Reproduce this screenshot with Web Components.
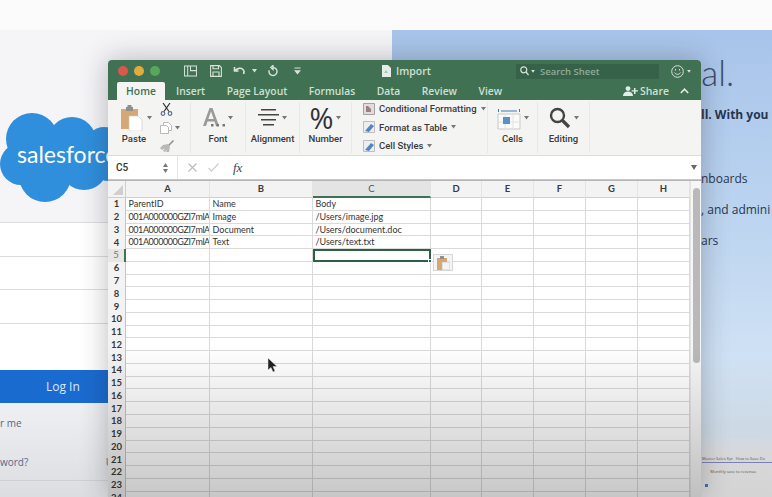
<!DOCTYPE html>
<html>
<head>
<meta charset="utf-8">
<title>Import</title>
<style>
  html, body { margin: 0; height: 100%; overflow: hidden; background: #fbfbfb; }
  body { font-family: "Open Sans", "Liberation Sans", sans-serif; }
</style>
</head>
<body>
<sf-page>
  <sf-login slot="left"></sf-login>
  <sf-promo slot="right"></sf-promo>
  <xl-window slot="window"></xl-window>
</sf-page>

<script>
const caret = `<svg width="5" height="4" viewBox="0 0 5 4"><path d="M0 0h5L2.500 3.500z" fill="#777"/></svg>`;

class SfPage extends HTMLElement {
  constructor() {
    super();
    this.attachShadow({ mode: "open" });
    this.shadowRoot.innerHTML = `
      <style>
        :host { display: block; position: relative; width: 772px; height: 497px; overflow: hidden; }
        .top { height: 30px; background: #fcfbfb; }
        .cols { display: grid; grid-template-columns: 392px 380px; height: 467px; }
        /* the window floats over the page like on a desktop */
        ::slotted([slot="window"]) { position: absolute; left: 108px; top: 60px; }
      </style>
      <div class="top"></div>
      <div class="cols">
        <slot name="left"></slot>
        <slot name="right"></slot>
      </div>
      <slot name="window"></slot>
    `;
  }
}

class SfLogin extends HTMLElement {
  constructor() {
    super();
    this.attachShadow({ mode: "open" });
    this.shadowRoot.innerHTML = `
      <style>
        :host { display: block; background: #f5f5f8; color: #54698d; overflow: hidden; }
        .logo { height: 192px; position: relative; }
        .logo svg { position: absolute; left: 0; top: 80px; display: block; }
        .logo span { position: absolute; left: 17px; top: 107px; font: 400 23px/34px Lato, "Open Sans", sans-serif; color: #fff; white-space: nowrap; }
        .form { background: #fff; }
        .field { height: 33.5px; border-top: 1px solid #dcdde0; box-sizing: border-box; }
        .gap { height: 14px; background: #fff; }
        .btn { height: 33px; background: #1a6bcf; color: #d9e8fa; font-size: 12px; display: flex; align-items: center; }
        .btn span { margin-left: 46px; }
        .foot { height: 94px; background: linear-gradient(#eff0f3, #dcdde0); font-size: 10px; }
        .row { display: flex; justify-content: space-between; }
        .r1 { padding-top: 13px; height: 26px; }
        .r2 { height: 14px; margin-top: 13px; }
        .line { margin-top: 11px; border-top: 1px solid #cfd0d3; }
      </style>
      <div class="logo">
        <svg width="125" height="95" viewBox="0 0 125 95" fill="#2f8fdc">
          <circle cx="32" cy="29" r="26"/><circle cx="72" cy="31" r="24"/><circle cx="104" cy="36" r="19"/>
          <circle cx="21" cy="54" r="21"/><circle cx="45" cy="66" r="26"/><circle cx="84" cy="56" r="24"/><circle cx="108" cy="54" r="17"/>
        </svg>
        <span>salesforce</span>
      </div>
      <div class="form">
        <div class="field"></div>
        <div class="field"></div>
        <div class="field"></div>
        <div class="field"></div>
        <div class="gap"></div>
      </div>
      <div class="btn"><span>Log In</span></div>
      <div class="foot">
        <div class="r1">r me</div>
        <div class="r2 row"><span>word?</span><span style="margin-right:279px">U</span></div>
        <div class="line"></div>
      </div>
    `;
  }
}

class SfPromo extends HTMLElement {
  constructor() {
    super();
    this.attachShadow({ mode: "open" });
    this.shadowRoot.innerHTML = `
      <style>
        :host { display: block; overflow: hidden; color: #26364f;
          background: linear-gradient(#a8c4ea 0, #b9d2ef 35%, #cfe1f4 70%, #cdd9e4 86%, #d8d8da 91%, #d4d4d4 100%); }
        h1 { margin: 22px 0 0 51px; font: 300 35px/40px Lato, "Open Sans", sans-serif; white-space: nowrap; color: #3c4c66; height: 40px; }
        p { margin: 0; padding-left: 309px; font-size: 12px; line-height: 16px; white-space: nowrap; }
        .lead { margin-top: 15px; font-weight: 700; }
        .a { margin-top: 48px; }
        .b { margin-top: 15px; }
        .strip { margin: 207px 0 0 310px; font-size: 4px; line-height: 6px; white-space: nowrap; color: #555; }
        .strip div:first-child { border-bottom: 1px solid #7c80b4; margin-bottom: 6px; }
        .dot { display: block; width: 3px; height: 3px; margin: 9px 0 0 3px; background: #3b6fb0; }
      </style>
      <h1>Start your free trial.</h1>
      <p class="lead">ll. With you</p>
      <p class="a">nboards</p>
      <p class="b">, and admini</p>
      <p class="b">ars</p>
      <div class="strip">
        <div>Master Sales Kpi &nbsp; How to Save Da</div>
        <div>&nbsp; &nbsp; &nbsp; &nbsp; Monthly save to revenue</div>
        <i class="dot"></i>
      </div>
    `;
  }
}

class XlWindow extends HTMLElement {
  constructor() {
    super();
    this.attachShadow({ mode: "open" });
    this.shadowRoot.innerHTML = `
      <style>
        :host { display: flex; flex-direction: column; width: 593px; height: 437px; overflow: hidden;
          border-radius: 4px 4px 0 0; background: #fff; box-shadow: 0 0 28px rgba(30,30,40,.3); }
      </style>
      <xl-titlebar></xl-titlebar>
      <xl-tabs></xl-tabs>
      <xl-ribbon></xl-ribbon>
      <xl-formula></xl-formula>
      <xl-sheet></xl-sheet>
    `;
  }
}

class XlTitlebar extends HTMLElement {
  constructor() {
    super();
    this.attachShadow({ mode: "open" });
    this.shadowRoot.innerHTML = `
      <style>
        :host { display: flex; align-items: center; height: 22px; background: #3f7152; color: #cfe0d4; flex: none; font-size: 10.5px; }
        .lights { display: flex; gap: 6px; margin-left: 10px; }
        .lights i { width: 10px; height: 10px; border-radius: 50%; }
        .tools { display: flex; align-items: center; margin-left: 24px; height: 22px; }
        .tools svg { display: block; }
        .doc { display: flex; align-items: center; gap: 5px; margin-left: 81px; width: 134px; flex: none; font-weight: 600; }
        .search { display: flex; align-items: center; gap: 2px; width: 143px; flex: none; height: 15px; padding-left: 4px; box-sizing: border-box; background: #37624a; color: #8eac9a; font-weight: 600; font-size: 9.5px; }
        .smile { margin-left: 12px; display: flex; align-items: center; gap: 3px; }
      </style>
      <div class="lights">
        <i style="background:#d9574b"></i><i style="background:#e2ac3c"></i><i style="background:#57a85a"></i>
      </div>
      <div class="tools">
        <svg width="13" height="12" viewBox="0 0 14 12" fill="none" stroke="#d6e3da" stroke-width="1.1"><rect x=".6" y=".6" width="12.8" height="10.8"/><path d="M4 .6v10.8M7 .6v5h6"/></svg>
        <svg style="margin-left:13px" width="12" height="12" viewBox="0 0 12 12" fill="none" stroke="#d6e3da" stroke-width="1.1"><path d="M.6.6h8.8l2 2v8.8H.6zM3 .8v3h5.5v-3M3 11V7h6v4"/></svg>
        <svg style="margin-left:11px" width="13" height="10" viewBox="0 0 13 10" fill="none" stroke="#d6e3da" stroke-width="1.6"><path d="M1.5 1v4h4M2 5c2-3 6-3.500 8-1.500 1 1 1.500 2.500 .5 4.500"/></svg>
        <svg style="margin-left:6px" width="5" height="4" viewBox="0 0 5 4"><path d="M0 0h5L2.500 3.500z" fill="#d6e3da"/></svg>
        <svg style="margin-left:10px" width="12" height="12" viewBox="0 0 12 12" fill="none" stroke="#d6e3da" stroke-width="1.4"><path d="M6 2.500a4 4 0 1 1-3.800 2.800M6 .5v4L3.800 2.500z"/></svg>
        <svg style="margin-left:15px" width="7" height="8" viewBox="0 0 8 8" fill="#d6e3da"><path d="M.5 0h7v1h-7zM0 3h8L4 8z"/></svg>
      </div>
      <div class="doc">
        <svg width="9" height="12" viewBox="0 0 9 12"><path d="M0 0h6l3 3v9H0z" fill="#e6ece8"/><path d="M2 8l2-3 2 3z" fill="#b5bdb8"/></svg>
        <span>Import</span>
      </div>
      <div class="search">
        <svg width="9" height="10" viewBox="0 0 9 10" fill="none" stroke="#d6e3da" stroke-width="1.2"><circle cx="3.800" cy="3.800" r="3"/><path d="M6 6l2.500 3"/></svg>
        <svg width="4" height="3" viewBox="0 0 5 4"><path d="M0 0h5L2.500 3.500z" fill="#d6e3da"/></svg>
        <span style="margin-left:3px">Search Sheet</span>
      </div>
      <div class="smile">
        <svg width="13" height="13" viewBox="0 0 13 13" fill="none" stroke="#d6e3da" stroke-width="1"><circle cx="6.500" cy="6.500" r="5.800"/><path d="M3.500 7.500c1.500 2.500 4.500 2.500 6 0"/><path d="M4.500 4v1.500M8.500 4v1.500"/></svg>
        <svg width="4" height="3" viewBox="0 0 5 4"><path d="M0 0h5L2.500 3.500z" fill="#d6e3da"/></svg>
      </div>
    `;
  }
}

class XlTabs extends HTMLElement {
  constructor() {
    super();
    this.attachShadow({ mode: "open" });
    this.shadowRoot.innerHTML = `
      <style>
        :host { display: flex; align-items: stretch; height: 18px; background: #3f7152; color: #cfe0d4; flex: none; font-size: 10.3px; font-weight: 600; }
        ul { display: flex; list-style: none; margin: 0 0 0 9px; padding: 0; }
        li { display: flex; align-items: center; justify-content: center; margin-right: 21.5px; }
        li.on { background: #f4f4f3; color: #3f7152; width: 48px; border-radius: 2px 2px 0 0; margin-right: 11px; }
        .share { margin-left: auto; display: flex; align-items: center; gap: 2px; margin-right: 12px; font-size: 10.5px; }
        .share svg:last-child { margin-left: 9px; }
      </style>
      <ul>
        <li class="on">Home</li>
        <li>Insert</li>
        <li>Page Layout</li>
        <li>Formulas</li>
        <li>Data</li>
        <li>Review</li>
        <li>View</li>
      </ul>
      <div class="share">
        <svg width="15" height="10" viewBox="0 0 15 10" fill="#e4ece7"><circle cx="5" cy="2.600" r="2.400"/><path d="M0 10c0-3 2-4.500 5-4.500s5 1.500 5 4.500zM11 2h1.500v2.200H15v1.400h-2.500V8H11V5.600H8.600V4.200H11z"/></svg>
        <span>Share</span>
        <svg width="9" height="6" viewBox="0 0 9 6" fill="none" stroke="#e4ece7" stroke-width="1.500"><path d="M.8 5l3.700-3.800L8.200 5"/></svg>
      </div>
    `;
  }
}

class XlGroup extends HTMLElement {
  constructor() {
    super();
    this.attachShadow({ mode: "open" });
    this.shadowRoot.innerHTML = `
      <style>
        :host { display: flex; flex-direction: column; align-items: center; box-sizing: border-box; height: 51px; border-right: 1px solid #e8e8e7; font: 500 9.5px Roboto, sans-serif; color: #3a3a3a; }
        .ic { height: 31px; display: flex; align-items: center; gap: 3px; }
        .label { line-height: 12px; }
      </style>
      <div class="ic"><slot></slot></div>
      <div class="label"></div>
    `;
  }
  connectedCallback() {
    this.style.width = this.getAttribute("w") + "px";
    this.shadowRoot.querySelector(".label").textContent = this.getAttribute("label");
  }
}

class XlRibbon extends HTMLElement {
  constructor() {
    super();
    this.attachShadow({ mode: "open" });
    this.shadowRoot.innerHTML = `
      <style>
        :host { display: flex; height: 56px; padding: 2px 0 0 8px; box-sizing: border-box; background: #f4f4f3; border-bottom: 1px solid #dcdcdc; flex: none; font: 500 9.5px Roboto, sans-serif; color: #3a3a3a; }
        .paste { display: flex; width: 75px; height: 51px; border-right: 1px solid #e8e8e7; box-sizing: border-box; }
        .paste .main { width: 36px; display: flex; flex-direction: column; align-items: center; }
        .paste .main .ic { height: 31px; display: flex; align-items: center; gap: 4px; margin-left: 5px; }
        .paste .label { line-height: 12px; }
        .mini { margin-left: 8px; display: flex; flex-direction: column; gap: 5px; padding-top: 1px; }
        .mini div { display: flex; align-items: center; gap: 3px; height: 13px; }
        .styles { width: 136px; height: 51px; border-right: 1px solid #e8e8e7; box-sizing: border-box; padding: 0 0 0 11px; display: flex; flex-direction: column; gap: 5px; }
        .styles div { display: flex; align-items: center; gap: 4px; height: 13.500px; white-space: nowrap; }
        .pct { font: 400 29px/30px "Open Sans", sans-serif; color: #333; }
      </style>
      <div class="paste">
        <div class="main">
          <div class="ic">
            <svg width="22" height="26" viewBox="0 0 22 26"><path d="M0 4h17v20H0z" fill="#d5a873"/><path d="M5 2h7v4H5z" fill="#8f8f8f"/><path d="M6.500 0h4v3h-4z" fill="#8f8f8f"/><path d="M8 11h9l4 4v11H8z" fill="#fff" stroke="#c8c8c8" stroke-width=".6"/></svg>
            ${caret}
          </div>
          <div class="label">Paste</div>
        </div>
        <div class="mini">
          <div><svg width="13" height="13" viewBox="0 0 13 13" fill="none" stroke="#333" stroke-width="1.200"><path d="M3 0l6 8.500M10 0L4 8.500"/><circle cx="3" cy="10.500" r="1.800" stroke="#5a6e8a"/><circle cx="10" cy="10.500" r="1.800" stroke="#5a6e8a"/></svg></div>
          <div style="margin-top:1px"><svg width="12" height="12" viewBox="0 0 12 12" fill="#fff" stroke="#b9b9b9"><path d="M.5 3.500h6l2 2v6h-8z"/><path d="M3.500.5h5l3 3v5h-3v-3l-2-2h-3z"/></svg>${caret}</div>
          <div style="margin-top:1px"><svg width="14" height="13" viewBox="0 0 14 13"><path d="M8 5l5-5 1 1-5 5z" fill="#8a8a8a"/><path d="M3 5l5-1 2 2-1 6-3 0 1-3-2 3-2-1 2-3-3 2-2-2z" fill="#b8b8b8"/></svg></div>
        </div>
      </div>
      <xl-group w="55" label="Font">
        <svg width="22" height="19" viewBox="0 0 22 19"><path d="M0 18L6.500 0h3L16 18h-3l-1.500-4.500h-7L3 18zM5.300 11h5.400L8 3.500z" fill="#9a9a9a"/><path d="M8 16h2.500v2.500H8zM13.500 16H16v2.500h-2.500zM19.500 16H22v2.500h-2.500z" fill="#777"/></svg>
        ${caret}
      </xl-group>
      <xl-group w="54" label="Alignment">
        <svg width="21" height="17" viewBox="0 0 21 17" fill="#444"><path d="M3 0h15v1.500H3zM0 5h21v1.500H0zM3 10h15v1.500H3zM5 15h11v1.500H5z"/></svg>
        ${caret}
      </xl-group>
      <xl-group w="52" label="Number">
        <span class="pct">%</span>
        ${caret}
      </xl-group>
      <div class="styles">
        <div><xl-cf-icon kind="cond"></xl-cf-icon><span>Conditional Formatting</span>${caret}</div>
        <div><xl-cf-icon></xl-cf-icon><span>Format as Table</span>${caret}</div>
        <div><xl-cf-icon></xl-cf-icon><span>Cell Styles</span>${caret}</div>
      </div>
      <xl-group w="50" label="Cells">
        <svg width="24" height="24" viewBox="0 0 24 24"><path d="M1 3h1v3H1zM23 3h-1v3h1zM4 4.500h16v1H4z" fill="#3b7bbf"/><path d="M1 8h22v15H1z" fill="#fbfbfb" stroke="#c9c9c9"/><path d="M8 8v15M16 8v15M1 16h22" stroke="#e2e2e2"/><path d="M6 11h7v7H6z" fill="#5b8fc9"/></svg>
        ${caret}
      </xl-group>
      <xl-group w="52" label="Editing">
        <svg width="22" height="22" viewBox="0 0 22 22" fill="none" stroke="#444"><circle cx="8.500" cy="8.500" r="6.500" stroke-width="2.400"/><path d="M13.500 13.500L20 20" stroke-width="3.200"/></svg>
        ${caret}
      </xl-group>
    `;
  }
}

class XlCfIcon extends HTMLElement {
  constructor() {
    super();
    this.attachShadow({ mode: "open" });
    this.shadowRoot.innerHTML = `
      <style>:host { display: block; width: 12px; height: 12px; }</style>
      <svg width="12" height="12" viewBox="0 0 12 12"></svg>
    `;
  }
  connectedCallback() {
    const svg = this.shadowRoot.querySelector("svg");
    if (this.getAttribute("kind") === "cond") {
      svg.innerHTML = `<path d="M.5.5h11v11H.5z" fill="#e3dcdc" stroke="#a9a0a0"/><path d="M3 3h2l3 3v3H3z" fill="#9d7f7f"/>`;
    } else {
      svg.innerHTML = `<path d="M.5.5h11v11H.5z" fill="#eeeeee" stroke="#bdbdbd"/><path d="M2 10l6-7 3 2-5 6z" fill="#4f87c4"/>`;
    }
  }
}

class XlFormula extends HTMLElement {
  constructor() {
    super();
    this.attachShadow({ mode: "open" });
    this.shadowRoot.innerHTML = `
      <style>
        :host { display: flex; align-items: center; height: 23px; background: #fff; border-bottom: 1px solid #c8c8c8; flex: none; font: 500 10px Roboto, sans-serif; color: #333; }
        .name { width: 60px; padding-left: 8px; box-sizing: border-box; display: flex; justify-content: space-between; align-items: center; height: 100%; }
        .sp { display: flex; flex-direction: column; gap: 2px; }
        .fx { margin-left: 9px; padding-left: 10px; height: 100%; border-left: 1px solid #e4e4e4; display: flex; align-items: center; gap: 11px; flex: 1; }
        em { font: italic 13px "Liberation Serif", serif; color: #444; margin-left: 3px; }
        .end { margin-left: auto; margin-right: 4px; }
      </style>
      <div class="name"><span>C5</span>
        <span class="sp">
          <svg width="5" height="4" viewBox="0 0 5 4"><path d="M0 4h5L2.500 0z" fill="#777"/></svg>
          <svg width="5" height="4" viewBox="0 0 5 4"><path d="M0 0h5L2.500 4z" fill="#777"/></svg>
        </span>
      </div>
      <div class="fx">
        <svg width="9" height="9" viewBox="0 0 9 9" fill="none" stroke="#bcbcbc" stroke-width="1.200"><path d="M.5.5l8 8M8.500.5l-8 8"/></svg>
        <svg width="11" height="9" viewBox="0 0 11 9" fill="none" stroke="#cfcfcf" stroke-width="1.200"><path d="M.5 5l3 3.200L10.500.5"/></svg>
        <em>fx</em>
        <svg class="end" width="6" height="5" viewBox="0 0 6 5"><path d="M0 0h6L3 5z" fill="#666"/></svg>
      </div>
    `;
  }
}

const SHEET_ROWS = {
  1: ["ParentID", "Name", "Body"],
  2: ["001A000000GZI7mlA", "Image", "/Users/image.jpg"],
  3: ["001A000000GZI7mlA", "Document", "/Users/document.doc"],
  4: ["001A000000GZI7mlA", "Text", "/Users/text.txt"]
};

class XlSheet extends HTMLElement {
  constructor() {
    super();
    this.attachShadow({ mode: "open" });
    let cells = `<div class="h corner"><svg width="10" height="10" viewBox="0 0 10 10"><path d="M10 0v10H0z" fill="#cfcfcf"/></svg></div>`;
    "ABCDEFGH".split("").forEach(c => {
      cells += `<div class="h col${c === "C" ? " sel" : ""}">${c}</div>`;
    });
    for (let r = 1; r <= 24; r++) {
      cells += `<div class="h row${r === 5 ? " sel" : ""}">${r}</div>`;
      for (let c = 0; c < 8; c++) {
        const text = (SHEET_ROWS[r] && SHEET_ROWS[r][c]) || "";
        let cls = "c";
        if (r === 5 && c === 2) cls += " active";
        if (r > 1 && c === 0 && text) cls += " id";
        cells += `<div class="${cls}">${text}</div>`;
      }
    }
    this.shadowRoot.innerHTML = `
      <style>
        :host { display: flex; flex: 1; min-height: 0; position: relative; background: #fff; border-top: 1px solid #b5b5b5; overflow: hidden; }
        .grid { display: grid; grid-template-columns: 18px 84px 103px 118px 51px 52px 52px 52px 52px; grid-template-rows: 17px; grid-auto-rows: 12.77px; width: 582px; font: 9px/12px Lato, "Liberation Sans", sans-serif; color: #333; align-content: start; }
        .h { background: #f3f3f3; display: flex; align-items: center; justify-content: center; box-sizing: border-box; font-weight: 700; font-size: 9.5px; color: #3a3a3a; }
        .col { border-right: 1px solid #e4e4e4; border-bottom: 1px solid #cfcfcf; }
        .col.sel { background: #e4e4e4; color: #555; font-weight: 400; border-bottom: 2px solid #3f7152; }
        .corner { border-bottom: 1px solid #cfcfcf; border-right: 1px solid #cfcfcf; justify-content: flex-end; align-items: flex-end; padding: 0 2px 2px 0; }
        .row { border-right: 1px solid #c4c4c4; }
        .row.sel { background: #e6e6e6; color: #777; font-weight: 400; border-right: 2px solid #3f7152; }
        .c { box-sizing: border-box; border-right: 1px solid #dadada; border-bottom: 1px solid #dadada; padding-left: 2.5px; white-space: nowrap; overflow: hidden; line-height: 11.800px; }
        .id { letter-spacing: -.42px; }
        .active { border: 2px solid #2f5f43; position: relative; overflow: visible; }
        .active::after { content: ""; position: absolute; right: -3px; bottom: -3px; width: 4px; height: 4px; background: #2f5f43; border: 1px solid #fff; box-sizing: border-box; }
        .bar { width: 11px; flex: none; background: #f6f6f6; border-left: 1px solid #e4e4e4; box-sizing: border-box; padding: 7px 1px 0 2px; }
        .bar i { display: block; height: 175px; background: #b9b9b9; border-radius: 4px; }
        .paste-opt { position: absolute; left: 325px; top: 73px; width: 20px; height: 17px; background: #f4f4f4; border: 1px solid #d6d6d6; box-sizing: border-box; display: flex; align-items: center; justify-content: center; }
        .cursor { position: absolute; left: 159px; top: 177px; }
        .shade { position: absolute; inset: 0; pointer-events: none; background: linear-gradient(transparent 0, transparent 52%, rgba(0,0,0,.06) 65%, rgba(0,0,0,.22) 100%); }
      </style>
      <div class="grid">${cells}</div>
      <div class="bar"><i></i></div>
      <div class="paste-opt">
        <svg width="13" height="14" viewBox="0 0 13 14"><path d="M0 2h10v12H0z" fill="#d5a873"/><path d="M3 0h4v3H3z" fill="#8f8f8f"/><path d="M5 6h8v8H5z" fill="#f4f4f4" stroke="#b9b9b9" stroke-width=".6"/></svg>
      </div>
      <svg class="cursor" width="10" height="15" viewBox="0 0 10 15"><path d="M1 0v12l3-2.500 2 4.500 2-1-2-4.500h4z" fill="#222" stroke="#eee" stroke-width=".5"/></svg>
      <div class="shade"></div>
    `;
  }
}

customElements.define("sf-page", SfPage);
customElements.define("sf-login", SfLogin);
customElements.define("sf-promo", SfPromo);
customElements.define("xl-window", XlWindow);
customElements.define("xl-titlebar", XlTitlebar);
customElements.define("xl-tabs", XlTabs);
customElements.define("xl-group", XlGroup);
customElements.define("xl-cf-icon", XlCfIcon);
customElements.define("xl-ribbon", XlRibbon);
customElements.define("xl-formula", XlFormula);
customElements.define("xl-sheet", XlSheet);
</script>
</body>
</html>
